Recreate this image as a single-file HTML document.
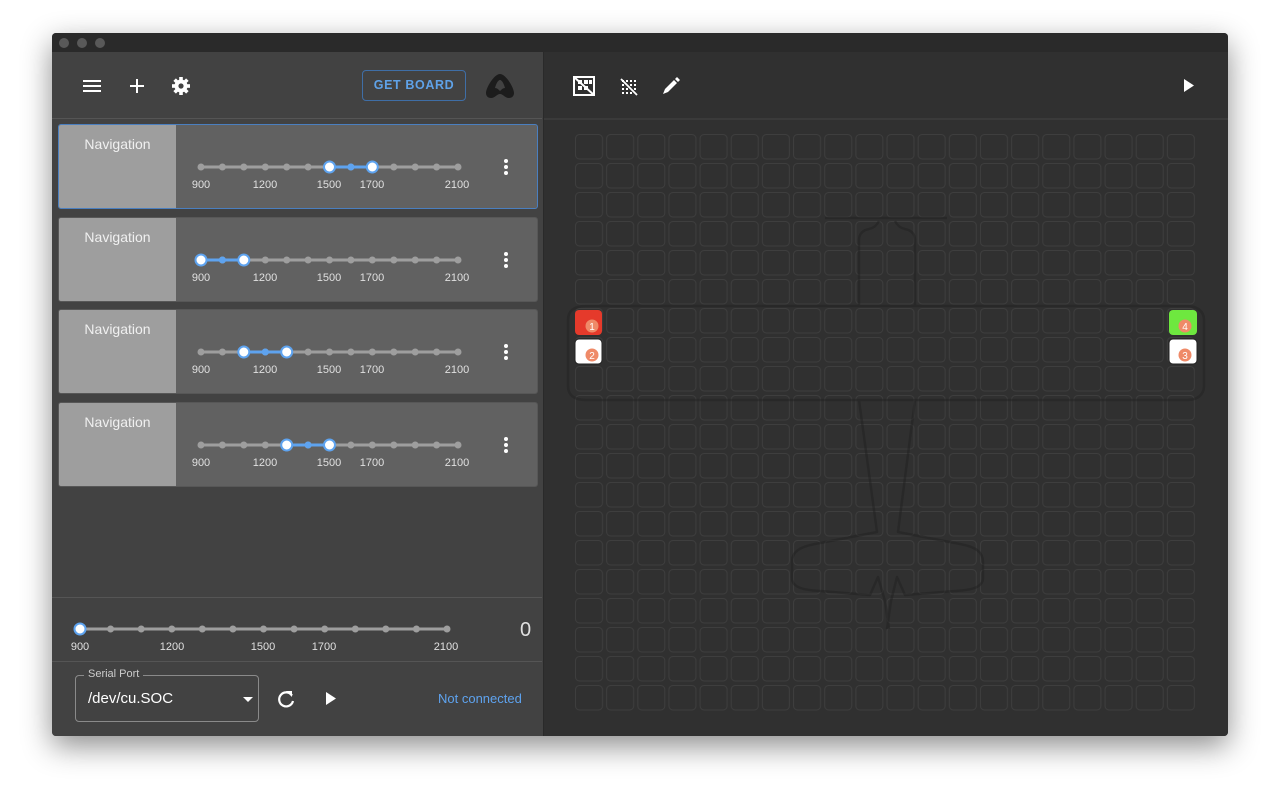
<!DOCTYPE html>
<html><head><meta charset="utf-8"><style>
*{box-sizing:border-box;margin:0;padding:0}
body{width:1280px;height:800px;background:#fff;font-family:"Liberation Sans",Roboto,sans-serif;position:relative;overflow:hidden}
.win{position:absolute;left:52px;top:33px;width:1176px;height:703px;background:#424242;box-shadow:0 10px 30px rgba(0,0,0,.45);border-radius:4px;overflow:hidden}
.tb{position:absolute;left:0;top:0;width:1176px;height:19px;background:#2a2a2a}
.dot{position:absolute;top:5px;width:10px;height:10px;border-radius:50%;background:#595959}
.left{position:absolute;left:0;top:19px;width:490px;height:684px;background:#424242}
.right{position:absolute;left:491px;top:19px;width:685px;height:684px;background:#303030;border-left:1px solid #2a2a2a}
.card{position:absolute;left:6px;width:480px;height:85px;background:#616161;border-radius:3px;overflow:hidden;border:1px solid #575757}
.card.sel{border-color:#4a7fc0}
.card .lab{position:absolute;left:0;top:0;width:117px;height:100%;background:#9e9e9e;color:#f0f0f0;font-size:14px;text-align:center;padding-top:11px}
.t{position:absolute;font-size:11px;color:#e0e0e0;transform:translateX(-50%)}
</style></head><body>
<div class="win">
<div class="tb"><div class="dot" style="left:7px"></div><div class="dot" style="left:25px"></div><div class="dot" style="left:43px"></div></div>
<div class="left">
 <svg style="position:absolute;left:30px;top:24px" width="130" height="20" viewBox="0 0 130 20">
  <rect x="1" y="4" width="18" height="2" fill="#fff"/><rect x="1" y="9" width="18" height="2" fill="#fff"/><rect x="1" y="14" width="18" height="2" fill="#fff"/>
  <rect x="48" y="9" width="14" height="2" fill="#fff"/><rect x="54" y="3" width="2" height="14" fill="#fff"/>
  <g transform="translate(99,10)"><circle r="6.5" fill="#fff"/><g fill="#fff"><rect x="-1.8" y="-9" width="3.6" height="18"/><rect x="-9" y="-1.8" width="18" height="3.6"/><rect x="-1.8" y="-9" width="3.6" height="18" transform="rotate(45)"/><rect x="-1.8" y="-9" width="3.6" height="18" transform="rotate(-45)"/></g><circle r="2.6" fill="#424242"/></g>
 </svg>
 <div style="position:absolute;left:310px;top:18px;width:104px;height:31px;border:1px solid #3f6ea6;border-radius:4px;color:#5fa2e8;font-size:12.5px;font-weight:bold;letter-spacing:.6px;text-align:center;line-height:29px">GET BOARD</div>
 <svg style="position:absolute;left:432px;top:20px" width="32" height="28" viewBox="0 0 32 28"><path d="M16 2C10 2 2 16 2 21c0 3 2 5 5 5 4 0 6-4 9-4s5 4 9 4c3 0 5-2 5-5C30 16 22 2 16 2z" fill="#1c1c1c"/><path d="M16 8c-2 0-4 4-5 8 2 0 3 1 5 3 2-2 3-3 5-3-1-4-3-8-5-8z" fill="#424242"/></svg>
 <div style="position:absolute;left:0;top:66px;width:490px;height:1px;background:#555"></div>
 <div class="card sel" style="top:72px"><div class="lab">Navigation</div></div>
 <div class="card" style="top:165px"><div class="lab">Navigation</div></div>
 <div class="card" style="top:257px"><div class="lab">Navigation</div></div>
 <div class="card" style="top:350px"><div class="lab">Navigation</div></div>
 <svg style="position:absolute;left:0;top:0" width="490" height="684">
  <defs><g id="sl"><line x1="149" x2="406" y1="0" y2="0" stroke="#9e9e9e" stroke-width="3"/>
   <g fill="#9e9e9e"><circle cx="149" r="3.5"/><circle cx="170.4" r="3.5"/><circle cx="191.8" r="3.5"/><circle cx="213.3" r="3.5"/><circle cx="234.7" r="3.5"/><circle cx="256.1" r="3.5"/><circle cx="277.5" r="3.5"/><circle cx="298.9" r="3.5"/><circle cx="320.3" r="3.5"/><circle cx="341.8" r="3.5"/><circle cx="363.2" r="3.5"/><circle cx="384.6" r="3.5"/><circle cx="406" r="3.5"/></g></g></defs>
  <use href="#sl" y="115"/><use href="#sl" y="208"/><use href="#sl" y="300"/><use href="#sl" y="393"/>
  <g stroke="#5ea3ef" stroke-width="3"><line x1="277.5" x2="320.3" y1="115" y2="115"/><line x1="149" x2="191.8" y1="208" y2="208"/><line x1="191.8" x2="234.7" y1="300" y2="300"/><line x1="234.7" x2="277.5" y1="393" y2="393"/></g>
  <g fill="#5ea3ef"><circle cx="298.9" cy="115" r="3.5"/><circle cx="170.4" cy="208" r="3.5"/><circle cx="213.3" cy="300" r="3.5"/><circle cx="256.1" cy="393" r="3.5"/></g>
  <g fill="#fff" stroke="#5ea3ef" stroke-width="2"><circle cx="277.5" cy="115" r="5.5"/><circle cx="320.3" cy="115" r="5.5"/><circle cx="149" cy="208" r="5.5"/><circle cx="191.8" cy="208" r="5.5"/><circle cx="191.8" cy="300" r="5.5"/><circle cx="234.7" cy="300" r="5.5"/><circle cx="234.7" cy="393" r="5.5"/><circle cx="277.5" cy="393" r="5.5"/></g>
  <g fill="#fff"><circle cx="454" cy="109" r="2"/><circle cx="454" cy="115" r="2"/><circle cx="454" cy="121" r="2"/>
  <circle cx="454" cy="202" r="2"/><circle cx="454" cy="208" r="2"/><circle cx="454" cy="214" r="2"/>
  <circle cx="454" cy="294" r="2"/><circle cx="454" cy="300" r="2"/><circle cx="454" cy="306" r="2"/>
  <circle cx="454" cy="387" r="2"/><circle cx="454" cy="393" r="2"/><circle cx="454" cy="399" r="2"/></g>
  <line x1="28" x2="395" y1="577" y2="577" stroke="#9e9e9e" stroke-width="3"/>
  <g fill="#9e9e9e"><circle cx="58.6" cy="577" r="3.5"/><circle cx="89.2" cy="577" r="3.5"/><circle cx="119.8" cy="577" r="3.5"/><circle cx="150.3" cy="577" r="3.5"/><circle cx="180.9" cy="577" r="3.5"/><circle cx="211.5" cy="577" r="3.5"/><circle cx="242.1" cy="577" r="3.5"/><circle cx="272.7" cy="577" r="3.5"/><circle cx="303.3" cy="577" r="3.5"/><circle cx="333.8" cy="577" r="3.5"/><circle cx="364.4" cy="577" r="3.5"/><circle cx="395" cy="577" r="3.5"/></g>
  <circle cx="28" cy="577" r="5.5" fill="#fff" stroke="#5ea3ef" stroke-width="2"/>
  <g transform="translate(234,647)" fill="none" stroke="#fff" stroke-width="2.2"><path d="M6 -3.5A7 7 0 1 0 7 2"/></g>
  <path d="M236 638l6 0 0 6z" fill="#fff" transform="translate(-2,1)"/>
  <path d="M274 640l10 6.5-10 6.5z" fill="#fff"/>
 </svg>
 <div class="t" style="left:149px;top:127px">900</div><div class="t" style="left:213px;top:127px">1200</div><div class="t" style="left:277px;top:127px">1500</div><div class="t" style="left:320px;top:127px">1700</div><div class="t" style="left:405px;top:127px">2100</div>
 <div class="t" style="left:149px;top:220px">900</div><div class="t" style="left:213px;top:220px">1200</div><div class="t" style="left:277px;top:220px">1500</div><div class="t" style="left:320px;top:220px">1700</div><div class="t" style="left:405px;top:220px">2100</div>
 <div class="t" style="left:149px;top:312px">900</div><div class="t" style="left:213px;top:312px">1200</div><div class="t" style="left:277px;top:312px">1500</div><div class="t" style="left:320px;top:312px">1700</div><div class="t" style="left:405px;top:312px">2100</div>
 <div class="t" style="left:149px;top:405px">900</div><div class="t" style="left:213px;top:405px">1200</div><div class="t" style="left:277px;top:405px">1500</div><div class="t" style="left:320px;top:405px">1700</div><div class="t" style="left:405px;top:405px">2100</div>
 <div style="position:absolute;left:0;top:545px;width:490px;height:1px;background:#555"></div>
 <div class="t" style="left:28px;top:589px">900</div><div class="t" style="left:120px;top:589px">1200</div><div class="t" style="left:211px;top:589px">1500</div><div class="t" style="left:272px;top:589px">1700</div><div class="t" style="left:394px;top:589px">2100</div>
 <div style="position:absolute;left:468px;top:567px;color:#e0e0e0;font-size:20px">0</div>
 <div style="position:absolute;left:0;top:609px;width:490px;height:1px;background:#555"></div>
 <div style="position:absolute;left:23px;top:623px;width:184px;height:47px;border:1px solid #8a8a8a;border-radius:4px"></div>
 <div style="position:absolute;left:32px;top:616px;background:#424242;padding:0 4px;color:#ccc;font-size:11px">Serial Port</div>
 <div style="position:absolute;left:36px;top:638px;color:#fff;font-size:15px">/dev/cu.SOC</div>
 <svg style="position:absolute;left:190px;top:644px" width="12" height="8"><path d="M1 1h10L6 6z" fill="#fff"/></svg>
 <div style="position:absolute;left:386px;top:639px;color:#5ea3ef;font-size:13px">Not connected</div>
</div>
<div class="right">
 <svg style="position:absolute;left:0;top:0" width="685" height="684">
  <defs><pattern id="g" x="31" y="82" width="31.15" height="29" patternUnits="userSpaceOnUse"><rect x="0.5" y="0.5" width="27" height="24.5" rx="4" fill="none" stroke="#3e3e3e" stroke-width="1"/></pattern></defs>
  <line x1="0" x2="685" y1="67" y2="67" stroke="#444"/>
  <g transform="translate(30,25)" fill="#fff"><rect x="0" y="0" width="20" height="18" fill="none" stroke="#fff" stroke-width="2"/><rect x="4" y="3" width="4" height="4"/><rect x="10" y="3" width="4" height="4"/><rect x="4" y="9" width="4" height="4"/><rect x="10" y="9" width="4" height="4"/><rect x="15" y="3" width="3" height="4"/><line x1="0" y1="0" x2="20" y2="18" stroke="#fff" stroke-width="2"/></g>
  <g transform="translate(76,26)" fill="#fff"><rect x="2" y="2" width="2" height="2"/><rect x="6" y="2" width="2" height="2"/><rect x="10" y="2" width="2" height="2"/><rect x="14" y="2" width="2" height="2"/><rect x="2" y="6" width="2" height="2"/><rect x="10" y="6" width="2" height="2"/><rect x="14" y="6" width="2" height="2"/><rect x="2" y="10" width="2" height="2"/><rect x="6" y="10" width="2" height="2"/><rect x="14" y="10" width="2" height="2"/><rect x="2" y="14" width="2" height="2"/><rect x="6" y="14" width="2" height="2"/><rect x="10" y="14" width="2" height="2"/><line x1="1" y1="1" x2="17" y2="17" stroke="#fff" stroke-width="1.8"/></g>
  <path d="M119 42l2-5 9-9 3 3-9 9z M131 27l2-2 3 3-2 2z" fill="#fff"/>
  <path d="M640 27l10 6.5-10 6.5z" fill="#fff"/>
  <rect x="31" y="82" width="623" height="580" fill="url(#g)"/>
  <g fill="none" stroke="#222" stroke-width="2.5" opacity=".5" stroke-linejoin="round">
   <path d="M281 166H403"/>
   <path d="M315 254V188c0-6 4-10 10-11 5-1 8-4 10-8"/><path d="M371 254V188c0-6-4-10-10-11-5-1-8-4-10-8"/>
   <path d="M24 268c0-9 6-14 18-14H643c10 0 17 5 17 14v66c0 9-7 14-17 14H42c-12 0-18-5-18-14z"/>
   <path d="M315 348l18 132-62 12c-16 3-23 8-23 18v16c0 9 10 12 28 13l50 4 8-18 7 24 4 28"/>
   <path d="M371 348l-17 132 62 12c16 3 23 8 23 18v16c0 9-10 12-28 13l-50 4-8-18-6 24-4 28"/>
  </g>
  <rect x="31" y="258" width="27" height="25" rx="4" fill="#e53a2b"/>
  <rect x="31" y="287" width="27" height="25" rx="4" fill="#fff" stroke="#222"/>
  <rect x="625" y="258" width="28" height="25" rx="4" fill="#6ee83f"/>
  <rect x="625" y="287" width="28" height="25" rx="4" fill="#fff" stroke="#222"/>
  <g fill="#ef8a68"><circle cx="48" cy="274" r="6.5"/><circle cx="48" cy="303" r="6.5"/><circle cx="641" cy="274" r="6.5"/><circle cx="641" cy="303" r="6.5"/></g>
  <g fill="#fff" font-size="10" font-family="Liberation Sans" text-anchor="middle"><text x="48" y="278">1</text><text x="48" y="307">2</text><text x="641" y="278">4</text><text x="641" y="307">3</text></g>
 </svg>
</div>
</div>
</body></html>
